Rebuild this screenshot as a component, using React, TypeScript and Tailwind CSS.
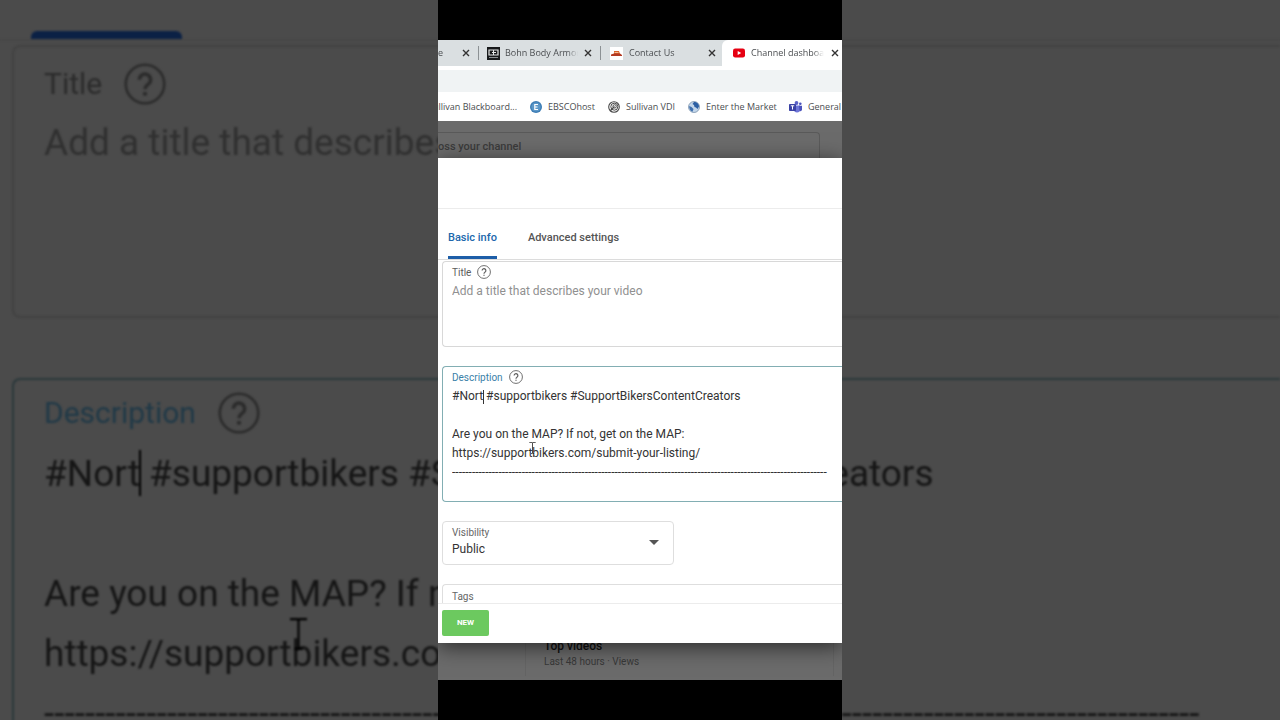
import { useState } from "react";
import type { ReactNode } from "react";

const DESCRIPTION = [
  "#Nort #supportbikers #SupportBikersContentCreators",
  "",
  "Are you on the MAP? If not, get on the MAP:",
  "https://supportbikers.com/submit-your-listing/",
  "-".repeat(113),
].join("\n");

const HelpIcon = ({ className }: { className: string }) => (
  <svg viewBox="0 0 24 24" fill="none" stroke="currentColor" className={className}>
    <circle cx="12" cy="12" r="11" strokeWidth={1.5} />
    <path d="M8.8 9.6a3.2 3.2 0 1 1 5.2 2.4c-1.2 1-2 1.500-2 3" strokeWidth={2} />
    <path d="M12 16.600v2" strokeWidth={2.200} />
  </svg>
);

const TextCursor = ({ className }: { className: string }) => (
  <svg viewBox="0 0 16 30" fill="none" stroke="currentColor" className={className}>
    <path d="M0 1h7l1 1 1-1h7M8 2v26M4 29h3l1-1 1 1h3" strokeWidth={2} />
  </svg>
);

const CloseIcon = () => (
  <svg viewBox="0 0 10 10" fill="none" stroke="currentColor" className="size-[10px]">
    <path d="M2 2l6 6M8 2l-6 6" strokeWidth={1.4} />
  </svg>
);

const BohnIcon = () => (
  <svg viewBox="0 0 13 13" className="size-[13px] shrink-0">
    <rect width="13" height="13" fill="#17191b" />
    <path d="M2 3h9v5H2z" fill="none" stroke="#e4e6e7" strokeWidth="1.200" />
    <path d="M5 5.500h4M6.500 3v5" stroke="#e4e6e7" />
    <path d="M2 10.500h9" stroke="#8b8f92" />
  </svg>
);

const ContactIcon = () => (
  <svg viewBox="0 0 13 13" className="size-[13px] shrink-0">
    <rect width="13" height="13" fill="#fff" />
    <path d="M4 4h5l1 3H4z" fill="#d9622b" />
    <path d="M1 7.500l3-1h6l2 1.500v1H1z" fill="#b33a22" />
    <path d="M4.500 5.500h4" stroke="#f3c19a" />
  </svg>
);

const YoutubeIcon = () => (
  <svg viewBox="0 0 12 12" className="size-3 shrink-0">
    <rect y="1.500" width="12" height="9" rx="2.200" fill="#e60012" />
    <path d="M4.700 4v4l3.500-2z" fill="#fff" />
  </svg>
);

const EbscoIcon = () => (
  <svg viewBox="0 0 12 12" className="size-3 shrink-0">
    <circle cx="6" cy="6" r="6" fill="#3d7db5" />
    <circle cx="6" cy="6" r="4.600" fill="#5b97c8" />
    <path d="M8 3.500H4.800v5H8M4.800 6h2.700" fill="none" stroke="#fff" strokeWidth="1.200" />
  </svg>
);

const VdiIcon = () => (
  <svg viewBox="0 0 12 12" fill="none" stroke="#4a4a4a" className="size-3 shrink-0">
    <circle cx="6" cy="6" r="5.300" strokeWidth="1.100" />
    <circle cx="6.300" cy="5.700" r="3.500" strokeWidth="1" />
    <circle cx="6.600" cy="5.400" r="1.700" strokeWidth="1" />
    <path d="M2 10l4.500-4.500" strokeWidth="1.200" />
  </svg>
);

const MarketIcon = () => (
  <svg viewBox="0 0 12 12" className="size-3 shrink-0">
    <circle cx="6" cy="6" r="5.500" fill="#c3d6ea" stroke="#7c93ac" strokeWidth=".8" />
    <path d="M6 1c3 0 5 2 5 4.500L9.500 8 8 6.500 6.500 6 6 4 4.500 3z" fill="#2c5fa3" />
    <path d="M1.200 5l2.300 1 2 2-1 2.800C2.500 10 1 8 1.200 5z" fill="#3e6fae" />
  </svg>
);

const TeamsIcon = () => (
  <svg viewBox="0 0 13 12" className="h-3 w-[13px] shrink-0">
    <circle cx="7.500" cy="2" r="1.900" fill="#5b62c8" />
    <circle cx="11.300" cy="2.800" r="1.300" fill="#4b53bc" />
    <path d="M5 4.500h6v4a3 3 0 0 1-6 0z" fill="#6f76d8" />
    <path d="M10 4.800h3v3.500a2 2 0 0 1-2.500 1.900z" fill="#4b53bc" />
    <rect y="3" width="7" height="7" rx=".8" fill="#3a41a5" />
    <path d="M1.800 4.800h3.400M3.500 4.800v3.700" stroke="#fff" />
  </svg>
);

type TabProps = { title: string; icon?: ReactNode; className: string };

const BrowserTab = ({ title, icon, className }: TabProps) => (
  <div className={`flex items-center ${className}`}>
    {icon}
    <span className="min-w-0 flex-1 overflow-hidden whitespace-nowrap mask-r-from-85%">
      {title}
    </span>
    <button aria-label={`Close ${title}`} className="shrink-0 text-[#333]">
      <CloseIcon />
    </button>
  </div>
);

const Bookmark = ({ title, icon, className }: TabProps) => (
  <a href="#" className={`flex shrink-0 items-center gap-[6px] whitespace-nowrap ${className}`}>
    {icon}
    {title}
  </a>
);

// Enlarged, darkened copy of the form behind the phone-shaped frame
const Backdrop = () => (
  <div aria-hidden="true" className="absolute inset-0 overflow-hidden bg-[#4b4b4b]">
    <div className="pt-[31px] blur-[1px]">
      <div className="border-b-2 border-[#474747] pl-[31px]">
        <div className="h-2 w-[151px] rounded-t-md bg-[#0b2145]" />
      </div>
      <div className="mt-1 ml-3 h-[273px] rounded-l-lg border-2 border-r-0 border-[#424242] pt-4 pl-[30px]">
        <div className="flex h-[42px] items-center gap-[22px] text-[30px] leading-[42px] text-[#2b2b2b]">
          <label htmlFor="backdrop-title">Title</label>
          <HelpIcon className="size-[42px]" />
        </div>
        <textarea
          id="backdrop-title"
          readOnly
          tabIndex={-1}
          placeholder="Add a title that describes your video"
          className="mt-2 block h-[60px] w-full resize-none overflow-hidden text-[37px] leading-[60px] whitespace-pre outline-none placeholder:text-[#303030]"
        />
      </div>
      <div className="mt-[60px] ml-3 h-[429px] rounded-l-lg border-2 border-r-0 border-[#2b383b] pt-3 pl-[30px]">
        <div className="flex h-[42px] items-center gap-[22px] text-[30px] leading-[42px]">
          <label htmlFor="backdrop-description" className="text-[#203947]">
            Description
          </label>
          <HelpIcon className="size-[42px] text-[#2b2b2b]" />
        </div>
        <div className="relative mt-[10px]">
          <textarea
            id="backdrop-description"
            readOnly
            tabIndex={-1}
            value={DESCRIPTION}
            className="block h-[300px] w-full resize-none overflow-hidden text-[37px] leading-[60px] whitespace-pre text-[#151515] outline-none"
          />
          <span className="absolute top-[6px] left-[95px] h-[46px] w-[2px] bg-black" />
          <TextCursor className="absolute top-[174px] left-[246px] h-8 w-[17px] text-black" />
        </div>
      </div>
    </div>
  </div>
);

const BrowserChrome = () => (
  <header className="bg-white font-['Open_Sans',sans-serif] text-[9px] text-[#4a4d50]">
    <div className="flex h-[26px] bg-[#dadfe1]">
      <BrowserTab title="e" className="my-[6px] w-[41px] border-r border-[#8c9194] pr-[7px]" />
      <BrowserTab
        title="Bohn Body Armor"
        icon={<BohnIcon />}
        className="my-[6px] w-[122px] gap-[5px] border-r border-[#8c9194] pr-[7px] pl-2"
      />
      <BrowserTab
        title="Contact Us"
        icon={<ContactIcon />}
        className="w-[121px] gap-[6px] pr-[5px] pl-[9px]"
      />
      <BrowserTab
        title="Channel dashboard"
        icon={<YoutubeIcon />}
        className="min-w-0 flex-1 gap-[6px] rounded-tl-md bg-white pr-[2px] pl-[11px]"
      />
    </div>
    <div className="pt-1">
      <input
        aria-label="Address"
        className="block h-[22px] w-full bg-[#f0f3f4] outline-none"
      />
    </div>
    <nav className="flex h-[29px] items-center overflow-hidden">
      <Bookmark title="ullivan Blackboard..." className="w-[79px] justify-end" />
      <Bookmark title="EBSCOhost" icon={<EbscoIcon />} className="ml-[13px] w-[78px]" />
      <Bookmark title="Sullivan VDI" icon={<VdiIcon />} className="w-20" />
      <Bookmark title="Enter the Market" icon={<MarketIcon />} className="w-[101px]" />
      <Bookmark title="General" icon={<TeamsIcon />} className="" />
    </nav>
  </header>
);

const App = () => {
  const [title, setTitle] = useState("");
  const [description, setDescription] = useState(DESCRIPTION);
  const [visibility, setVisibility] = useState("Public");

  return (
    <div className="relative min-h-screen overflow-hidden bg-[#4b4b4b] font-[Roboto,sans-serif]">
      <Backdrop />

      <main className="relative mx-auto min-h-screen w-full max-w-[404px] overflow-hidden bg-black py-10">
        <BrowserChrome />

        {/* Page above the dialog */}
        <section className="h-[37px] bg-[#6b6b6b] pt-[11px]">
          <div className="mr-[22px] flex h-[26px] items-center rounded-tr border-t border-r border-[#5a5a5a] pt-[3px] text-[11px] font-medium text-[#3b3b3b]">
            oss your channel
          </div>
        </section>

        {/* Dialog */}
        <section className="relative bg-white shadow-[0_4px_20px_rgba(0,0,0,0.6)]">
          <div className="h-[51px] border-b border-[#ececec]" />
          <div className="flex h-[51px] items-stretch gap-[31px] border-b border-[#dcdcdc] px-[10px] text-[11px] font-medium">
            <button className="border-b-3 border-[#1d5ea8] pt-3 text-[#2067ac]">
              Basic info
            </button>
            <button className="border-b-3 border-transparent pt-3 text-[#555]">
              Advanced settings
            </button>
          </div>

          <div className="flex flex-col gap-[19px] pt-px pl-1">
            <div className="h-[86px] rounded-l border border-r-0 border-[#d8d8d8] pt-[3px] pl-[9px]">
              <div className="flex h-[14px] items-center gap-[6px] text-[10px] text-[#5c5c5c]">
                <label htmlFor="title">Title</label>
                <HelpIcon className="size-[14px]" />
              </div>
              <textarea
                id="title"
                value={title}
                onChange={(e) => setTitle(e.target.value)}
                placeholder="Add a title that describes your video"
                className="mt-[3px] block h-[57px] w-full resize-none overflow-hidden text-[12px] leading-[19px] outline-none placeholder:text-[#909090]"
              />
            </div>

            <div className="h-[136px] rounded-l border border-r-0 border-[#82aeb3] pt-[3px] pl-[9px]">
              <div className="flex h-[14px] items-center gap-[6px] text-[10px]">
                <label htmlFor="description" className="text-[#3a7fa8]">
                  Description
                </label>
                <HelpIcon className="size-[14px] text-[#5c5c5c]" />
              </div>
              <div className="relative mt-[3px]">
                <textarea
                  id="description"
                  value={description}
                  onChange={(e) => setDescription(e.target.value)}
                  className="block h-[114px] w-full resize-none overflow-hidden text-[12px] leading-[19px] whitespace-pre text-[#333] outline-none"
                />
                <span className="absolute top-[3px] left-[31px] h-[14px] w-px bg-[#333]" />
                <TextCursor className="absolute top-[55px] left-[77px] h-3 w-[7px] text-[#222]" />
              </div>
            </div>

            <div className="relative h-11 w-[232px] rounded border border-[#dedede] pt-1 pl-[9px]">
              <label htmlFor="visibility" className="block text-[10px] leading-[14px] text-[#666]">
                Visibility
              </label>
              <select
                id="visibility"
                value={visibility}
                onChange={(e) => setVisibility(e.target.value)}
                className="block w-full appearance-none text-[12px] leading-[19px] text-[#333] outline-none"
              >
                <option>Public</option>
                <option>Unlisted</option>
                <option>Private</option>
              </select>
              <svg
                viewBox="0 0 10 5"
                className="pointer-events-none absolute top-[18px] right-[14px] h-[5px] w-[10px] fill-[#555]"
              >
                <path d="M0 0h10L5 5z" />
              </svg>
            </div>

            <div className="h-[19px] rounded-tl border-t border-l border-[#dedede] pt-[5px] pl-[9px] text-[10px] leading-[14px] text-[#666]">
              Tags
            </div>
          </div>

          <footer className="h-10 border-t border-[#ececec] pt-[6px] pl-1">
            <button className="block h-[26px] w-[47px] rounded-[2px] bg-[#6cc95f] text-[8px] font-bold text-white">
              NEW
            </button>
          </footer>
        </section>

        {/* Page below the dialog */}
        <section className="h-[37px] overflow-hidden bg-[#6b6b6b]">
          <div className="mr-2 ml-[87px] h-full border-x border-[#646464] pl-[18px]">
            <h2 className="-mt-1 text-[12px] leading-[14px] font-medium text-[#111]">Top videos</h2>
            <p className="mt-[2px] text-[10px] leading-[14px] text-[#383838]">
              Last 48 hours · Views
            </p>
          </div>
        </section>
      </main>
    </div>
  );
};

export default App;
